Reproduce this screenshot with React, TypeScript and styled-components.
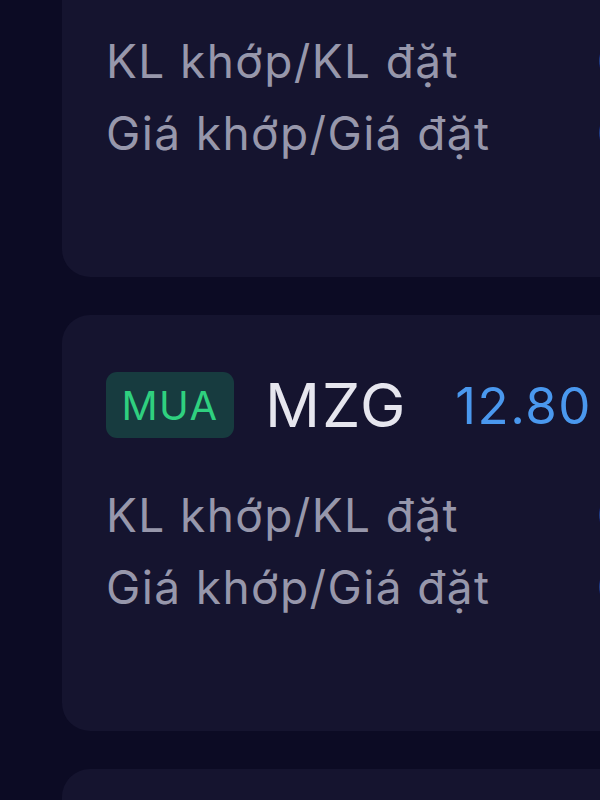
import React from "react";
import styled, { createGlobalStyle } from "styled-components";

const Global = createGlobalStyle`
  html, body {
    margin: 0;
    padding: 0;
    background: #0c0b24;
    overflow: hidden;
    width: 600px;
    height: 800px;
  }
  * { box-sizing: border-box; }
`;

const Page = styled.div`
  width: 600px;
  height: 800px;
  overflow: hidden;
  background: #0c0b24;
  font-family: Inter, "Liberation Sans", "Noto Sans", sans-serif;
`;

const List = styled.div`
  display: flex;
  flex-direction: column;
  gap: 38px;
  margin-top: -139px;
  padding-left: 62px;
`;

const Card = styled.div`
  width: 700px;
  height: 416px;
  flex-shrink: 0;
  background: #15142f;
  border-radius: 28px;
  padding: 57px 0 0 44px;
  display: flex;
  flex-direction: column;
`;

const Header = styled.div`
  display: flex;
  align-items: center;
  height: 66px;
`;

const SideBadge = styled.span<{ $side: "buy" | "sell" }>`
  display: inline-flex;
  align-items: center;
  justify-content: center;
  height: 66px;
  width: 128px;
  border-radius: 11px;
  background: ${(p) => (p.$side === "buy" ? "#173b3f" : "#3d1a2a")};
  color: ${(p) => (p.$side === "buy" ? "#2fd07f" : "#f0506a")};
  font-size: 40px;
  letter-spacing: 1.5px;
`;

const Symbol = styled.span`
  margin-left: 31px;
  font-size: 61px;
  color: #e6e6ee;
  letter-spacing: 1.8px;
`;

const Price = styled.span`
  margin-left: 48px;
  font-size: 51px;
  color: #4a98ee;
  letter-spacing: 1.5px;
`;

const Rows = styled.div`
  display: grid;
  grid-template-columns: 491px auto;
  row-gap: 17px;
  margin-top: 50px;
`;

const Label = styled.span`
  font-size: 46px;
  line-height: 55px;
  color: #9797ab;
  letter-spacing: 1.4px;
  white-space: nowrap;
`;

const Value = styled.span`
  font-size: 46px;
  line-height: 55px;
  color: #9797ab;
  letter-spacing: 1.4px;
  white-space: nowrap;
`;

type Order = { side: "buy" | "sell"; symbol: string; price: string; qty: string; match: string };

const orders: Order[] = [
  { side: "buy", symbol: "MZG", price: "12.80", qty: "0/100", match: "0/12.80" },
  { side: "buy", symbol: "MZG", price: "12.80", qty: "0/100", match: "0/12.80" },
  { side: "buy", symbol: "MZG", price: "12.80", qty: "0/100", match: "0/12.80" },
];

export default function App() {
  return (
    <Page>
      <Global />
      <List>
        {orders.map((o, i) => (
          <Card key={i}>
            <Header>
              <SideBadge $side={o.side}>{o.side === "buy" ? "MUA" : "BÁN"}</SideBadge>
              <Symbol>{o.symbol}</Symbol>
              <Price>{o.price}</Price>
            </Header>
            <Rows>
              <Label>KL khớp/KL đặt</Label>
              <Value>{o.qty}</Value>
              <Label>Giá khớp/Giá đặt</Label>
              <Value>{o.match}</Value>
            </Rows>
          </Card>
        ))}
      </List>
    </Page>
  );
}
